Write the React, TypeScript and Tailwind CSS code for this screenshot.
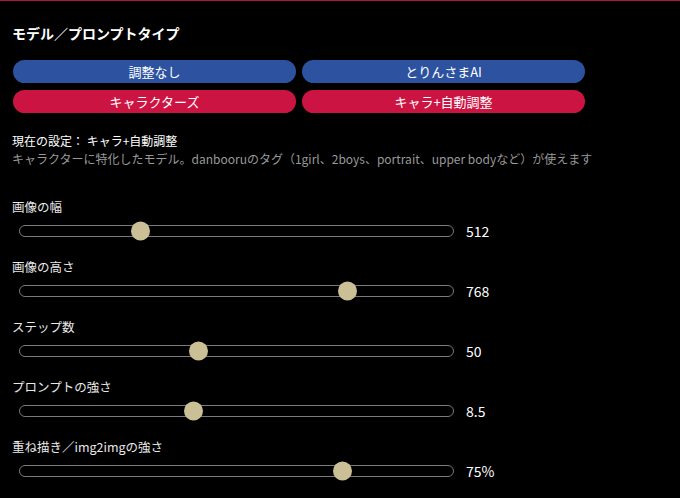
import React from "react";

interface SliderProps {
  label: string;
  pos: number;
  value: string;
}

const Slider: React.FC<SliderProps> = ({ label, pos, value }): JSX.Element => {
  return (
    <div className="flex flex-col h-[60px]">
      <div className="h-[18px] leading-[18px] text-[12.5px] text-[#e8e8e8]">{label}</div>
      <div className="flex items-center h-[22px] mt-[4px] pl-[7px]">
        <div className="relative w-[435px] h-[12px] rounded-full border-[1.5px] border-[#7a7a7a] bg-black">
          {/* thumb sits over the track */}
          <div
            className="absolute top-1/2 -translate-y-1/2 w-[19px] h-[19px] rounded-full bg-[#cbbf96]"
            style={{ left: `${pos * 4.17 - 2}px` }}
          />
        </div>
        <span className="ml-[12px] text-[14px] text-white">{value}</span>
      </div>
    </div>
  );
};

const App: React.FC = (): JSX.Element => {
  const sliders = [
    { label: "画像の幅", pos: 27, value: "512" },
    { label: "画像の高さ", pos: 76.7, value: "768" },
    { label: "ステップ数", pos: 41, value: "50" },
    { label: "プロンプトの強さ", pos: 39.8, value: "8.5" },
    { label: "重ね描き／img2imgの強さ", pos: 75.5, value: "75%" },
  ];

  return (
    <div
      className="w-[680px] h-[498px] bg-black border-t border-[#a8183c] overflow-hidden text-white"
      style={{ fontFamily: '"Noto Sans CJK JP", "Noto Sans", sans-serif' }}
    >
      <div className="pl-[12px] pt-[22px]">
        <h2 className="text-[14px] font-bold leading-[20px]">モデル／プロンプトタイプ</h2>
        <div className="grid grid-cols-2 gap-x-[6px] gap-y-[7px] w-[572px] mt-[17px] ml-[1px]">
          <button className="h-[23px] rounded-full bg-[#2c52a0] text-[13px] text-white">調整なし</button>
          <button className="h-[23px] rounded-full bg-[#2c52a0] text-[13px] text-white">とりんさまAI</button>
          <button className="h-[23px] rounded-full bg-[#cc1442] text-[13px] text-white">キャラクターズ</button>
          <button className="h-[23px] rounded-full bg-[#cc1442] text-[13px] text-white">キャラ+自動調整</button>
        </div>
        <div className="mt-[19px] text-[12px] leading-[18px]">現在の設定： キャラ+自動調整</div>
        <div className="text-[12px] leading-[18px] text-[#999999]">
          キャラクターに特化したモデル。danbooruのタグ（1girl、2boys、portrait、upper bodyなど）が使えます
        </div>
        <div className="flex flex-col mt-[30px]">
          {sliders.map((s) => (
            <Slider key={s.label} label={s.label} pos={s.pos} value={s.value} />
          ))}
        </div>
      </div>
    </div>
  );
};

export default App;
